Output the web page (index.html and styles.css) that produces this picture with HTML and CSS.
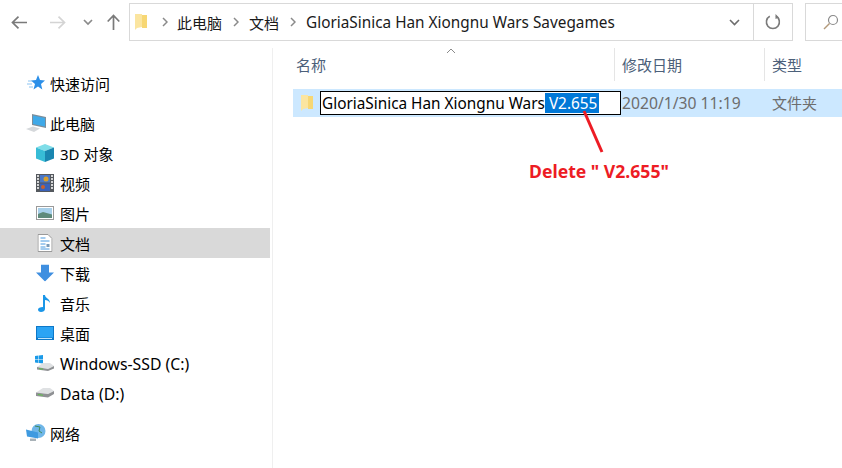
FILE: index.html
```html
<!DOCTYPE html>
<html lang="zh-CN">
<head>
  <meta charset="UTF-8">
  <title>文档</title>
  <link rel="stylesheet" href="styles.css">
</head>
<body>

  <div class="explorer">
    <!-- Toolbar -->
    <div class="toolbar">
      <div class="nav-btns">
        <svg class="nav-back" width="16" height="13" viewBox="0 0 16 13"><path d="M16 6.500H1.500M7.500 .7L1.500 6.500l6 5.800" fill="none" stroke="#7a7a7a" stroke-width="1.700"/></svg>
        <svg class="nav-forward" width="16" height="13" viewBox="0 0 16 13"><path d="M0 6.500h14.500M8.500 .7l6 5.800-6 5.800" fill="none" stroke="#d4d4d4" stroke-width="1.700"/></svg>
        <svg class="nav-down" width="10" height="7" viewBox="0 0 10 7"><path d="M1 1l4 4 4-4" fill="none" stroke="#8a8a8a" stroke-width="1.700"/></svg>
        <svg class="nav-up" width="13" height="16" viewBox="0 0 13 16"><path d="M6.500 16V1.500M.7 7.500l5.800-6 5.800 6" fill="none" stroke="#7a7a7a" stroke-width="1.700"/></svg>
      </div>

      <div class="address">
        <svg class="addr-folder" width="13" height="18" viewBox="0 0 13 18"><path d="M7 2h5v13H7z" fill="#f7d774"/><path d="M0 1h7v13l-5 1-2 2z" fill="#fbe5a0"/></svg>
        <svg class="crumb-sep first-sep" width="6" height="10" viewBox="0 0 6 10"><path d="M1 1l4 4-4 4" fill="none" stroke="#8a8a8a" stroke-width="1.500"/></svg>
        <span class="crumb">此电脑</span>
        <svg class="crumb-sep" width="6" height="10" viewBox="0 0 6 10"><path d="M1 1l4 4-4 4" fill="none" stroke="#8a8a8a" stroke-width="1.500"/></svg>
        <span class="crumb">文档</span>
        <svg class="crumb-sep" width="6" height="10" viewBox="0 0 6 10"><path d="M1 1l4 4-4 4" fill="none" stroke="#8a8a8a" stroke-width="1.500"/></svg>
        <span class="crumb crumb-latin">GloriaSinica Han Xiongnu Wars Savegames</span>
        <div class="addr-drop">
          <svg width="11" height="7" viewBox="0 0 11 7"><path d="M1 1l4.500 4.500L10 1" fill="none" stroke="#6d6d6d" stroke-width="1.600"/></svg>
        </div>
        <div class="addr-refresh">
          <svg width="16" height="16" viewBox="0 0 16 16"><path d="M11 2.300A6.500 6.500 0 1 1 4.800 2.300" fill="none" stroke="#7a7a7a" stroke-width="1.600"/><path d="M10.500 0v5l3.500-1.500z" fill="#7a7a7a"/></svg>
        </div>
      </div>

      <div class="search">
        <svg width="16" height="16" viewBox="0 0 16 16"><circle cx="10" cy="6" r="4.500" fill="none" stroke="#8a8a8a" stroke-width="1.200"/><path d="M6.500 9.500L1 15" stroke="#b39a7a" stroke-width="1.500"/></svg>
      </div>
    </div>

    <div class="main">
      <!-- Sidebar -->
      <div class="sidebar">
        <div class="side-item top-item quick">
          <svg width="18" height="16" viewBox="0 0 18 16"><path d="M11 0l2 5 5 .5-4 3.500 1.300 5.500L11 11.500 6.500 14.500 8 9 4 5.500 9 5z" fill="#2b8fe8"/><path d="M1 6h4M0 9h5M2 12h4" stroke="#8cc4f2" stroke-width="1"/></svg>
          <span>快速访问</span>
        </div>
        <div class="side-item top-item">
          <svg width="20" height="18" viewBox="0 0 20 18"><path d="M6 0l14 3v11L6 11z" fill="#7d8e9a"/><path d="M7 1.500l12 2.500v8.500L7 10z" fill="#3fa9e8"/><path d="M0 15l7-2.500 7 2-6 3.500z" fill="#d5d8db"/></svg>
          <span>此电脑</span>
        </div>
        <div class="side-item">
          <svg width="18" height="18" viewBox="0 0 18 18"><path d="M9 0l9 3.500L9 7 0 3.500z" fill="#7fdde8"/><path d="M0 3.500L9 7v11l-9-3.500z" fill="#37bcd6"/><path d="M18 3.500L9 7v11l9-3.500z" fill="#1a86b0"/></svg>
          <span>3D 对象</span>
        </div>
        <div class="side-item">
          <svg width="18" height="18" viewBox="0 0 18 18"><rect width="18" height="18" fill="#55595e"/><rect x="4" y="1" width="10" height="7.500" fill="#4a78c8"/><rect x="4" y="9.500" width="10" height="7.500" fill="#3a62b8"/><circle cx="10" cy="5" r="2.500" fill="#d9a02e"/><circle cx="7" cy="13" r="2" fill="#c9602e"/><path d="M1 2h2M1 5h2M1 8h2M1 11h2M1 14h2M15 2h2M15 5h2M15 8h2M15 11h2M15 14h2" stroke="#fff" stroke-width="1.500"/></svg>
          <span>视频</span>
        </div>
        <div class="side-item">
          <svg width="18" height="14" viewBox="0 0 18 14"><rect x=".5" y=".5" width="17" height="13" fill="#fff" stroke="#9a9a9a"/><rect x="2" y="2" width="14" height="10" fill="#a8d0ea"/><path d="M2 8l5-2 9 2.500V12H2z" fill="#5f8a7a"/></svg>
          <span>图片</span>
        </div>
        <div class="side-item selected">
          <svg width="15" height="18" viewBox="0 0 15 18"><path d="M.5.5h10l4 4v13H.5z" fill="#fff" stroke="#9a9a9a"/><path d="M3 4h5M3 7h9M3 10h5M3 13h5M3 15h9" stroke="#4a9ae0" stroke-width="1"/><rect x="9" y="10" width="3" height="3" fill="#7a9ab8"/></svg>
          <span>文档</span>
        </div>
        <div class="side-item">
          <svg width="18" height="17" viewBox="0 0 18 17"><path d="M5 0h8v8h5l-9 9-9-9h5z" fill="#3f8fe0"/></svg>
          <span>下载</span>
        </div>
        <div class="side-item">
          <svg width="14" height="18" viewBox="0 0 14 18"><path d="M5 1h2c0 3 5 3.500 5 8-1-2-3-3-5-3v9c0 2-2 3-4 3s-3-1-3-2.500S2 13 5 13z" fill="#1a96e8"/></svg>
          <span>音乐</span>
        </div>
        <div class="side-item">
          <svg width="18" height="14" viewBox="0 0 18 14"><rect width="18" height="14" fill="#0d78c8"/><rect x="1" y="1" width="16" height="10.500" fill="#2ba4f4"/><path d="M2 12.500h14" stroke="#bfe4fb"/></svg>
          <span>桌面</span>
        </div>
        <div class="side-item drive-item">
          <svg width="20" height="16" viewBox="0 0 20 16"><path d="M0 1l3.500-.5V4H0zM4 .4L8 0v4H4zM0 4.500h3.500V8L0 7.500zM4 4.500h4v4L4 8z" fill="#1a9ae8"/><path d="M2 12l6-4h7l4 3-6 3z" fill="#dfe1e3"/><path d="M2 12l11 2 6-3v2.500L13 16 2 14.500z" fill="#8f9194"/><path d="M4 13l4 .7v1L4 14z" fill="#5fc24a"/></svg>
          <span>Windows-SSD (C:)</span>
        </div>
        <div class="side-item drive-item">
          <svg width="20" height="10" viewBox="0 0 20 10"><path d="M1 4.500L8 0h7l4 3-6 3z" fill="#dfe1e3"/><path d="M1 4.500L13 6l6-3v3l-6 3.500L1 8z" fill="#8f9194"/><path d="M3 6l5 .7v1L3 7z" fill="#5fc24a"/></svg>
          <span>Data (D:)</span>
        </div>
        <div class="side-item top-item network">
          <svg width="20" height="18" viewBox="0 0 20 18"><circle cx="12.500" cy="7" r="7" fill="#6fb6e8"/><path d="M9 2l5 1-1 4 3 2" fill="none" stroke="#3f8a5a"/><path d="M0 5.500l12 3v6L1 12.500z" fill="#3f9ae0"/><path d="M4 14.500h6V17H4z" fill="#a9b2b8"/></svg>
          <span>网络</span>
        </div>
      </div>

      <div class="splitter"></div>

      <!-- File list -->
      <div class="files">
        <svg class="sort-arrow" width="10" height="6" viewBox="0 0 10 6"><path d="M1 5l4-4 4 4" fill="none" stroke="#8a8a8a"/></svg>
        <div class="col-head">
          <div class="col col-name">名称</div>
          <div class="col col-date">修改日期</div>
          <div class="col col-type">类型</div>
        </div>
        <div class="file-row">
          <svg class="file-icon" width="13" height="18" viewBox="0 0 13 18"><path d="M7 2h5v13H7z" fill="#f7d774"/><path d="M0 1h7v13l-5 1-2 2z" fill="#fbe5a0"/></svg>
          <div class="rename"><span>GloriaSinica Han Xiongnu Wars</span><span class="sel"> V2.655</span></div>
          <div class="file-date">2020/1/30 11:19</div>
          <div class="file-type">文件夹</div>
        </div>

        <!-- Annotation drawn over the list -->
        <svg class="pointer" width="24" height="46" viewBox="0 0 24 46"><path d="M2 2l18 41" stroke="#ed1c24" stroke-width="3" fill="none"/></svg>
        <div class="note">Delete " V2.655"</div>
      </div>
    </div>
  </div>

</body>
</html>
```

FILE: styles.css
```css
/* General Styles */
body {
  font-family: "Noto Sans", "Noto Sans CJK SC", sans-serif;
  font-size: 15px;
  color: #000;
  background-color: #fff;
  margin: 0;
}

.explorer {
  height: 468px;
  overflow: hidden;
}

/* Toolbar */
.toolbar {
  display: flex;
  height: 38px;
  padding-top: 3px;
}

.nav-btns {
  width: 129px;
  display: flex;
  align-items: center;
}

.nav-back { margin-left: 11px; }
.nav-forward { margin-left: 23px; }
.nav-down { margin-left: 17px; }
.nav-up { margin-left: 14px; }

.address {
  width: 662px;
  border: 1px solid #d9d9d9;
  display: flex;
  align-items: center;
  color: #1a1a1a;
}

.addr-folder { margin-left: 5px; }
.crumb-sep { margin: 0 10px 0 11px; }
.first-sep { margin-left: 14px; margin-right: 9px; }
.crumb { white-space: nowrap; }
.crumb-latin { font-size: 15.35px; }

.addr-drop {
  margin-left: auto;
  width: 33px;
  display: flex;
  justify-content: center;
  padding-right: 4px;
  box-sizing: border-box;
}

.addr-refresh {
  width: 38px;
  height: 100%;
  border-left: 1px solid #d9d9d9;
  display: flex;
  align-items: center;
  justify-content: center;
}

.search {
  flex: 1;
  margin-left: 12px;
  border: 1px solid #d9d9d9;
  border-right: none;
  display: flex;
  align-items: center;
  padding-left: 17px;
}

/* Main area */
.main {
  display: flex;
  height: 427px;
}

.sidebar {
  width: 270px;
  padding-top: 27px;
  flex-shrink: 0;
}

.side-item {
  height: 30px;
  display: flex;
  align-items: center;
  padding-left: 60px;
  position: relative;
  white-space: nowrap;
}

.side-item svg {
  position: absolute;
  left: 45px;
  top: 50%;
  transform: translate(-50%, -50%);
}

.drive-item {
  font-size: 15.8px;
  box-sizing: border-box;
  padding-top: 2px;
}

.top-item { padding-left: 50px; }
.top-item svg { left: 36px; }
.network { margin-top: 10px; }
.quick { margin-bottom: 10px; }
.selected { background-color: #d9d9d9; }

.splitter {
  width: 1px;
  margin: 7px 0 0 2px;
  background-color: #efefef;
}

/* File list */
.files {
  flex: 1;
  position: relative;
  padding-left: 20px;
}

.sort-arrow {
  position: absolute;
  left: 173px;
  top: 7px;
}

.col-head {
  display: flex;
  height: 33px;
  margin-top: 7px;
  color: #4c607a;
}

.col {
  display: flex;
  align-items: center;
  border-right: 1px solid #e5e5e5;
  box-sizing: border-box;
}

.col-name { width: 322px; padding-left: 3px; }
.col-date { width: 150px; padding-left: 7px; }
.col-type { border-right: none; padding-left: 7px; }

.file-row {
  display: flex;
  align-items: center;
  height: 28px;
  margin-top: 8px;
  background-color: #cce8ff;
  color: #6d6d6d;
}

.file-icon { margin-left: 8px; }

.rename {
  width: 301px;
  height: 24px;
  margin-left: 6px;
  padding-left: 1px;
  box-sizing: border-box;
  border: 1px solid #000;
  background-color: #fff;
  color: #000;
  display: flex;
  align-items: center;
  white-space: pre;
  font-size: 15.35px;
}

.sel {
  background-color: #0078d7;
  color: #fff;
  height: 20px;
  line-height: 20px;
  padding-right: 2px;
}

.file-date {
  width: 150px;
  padding-left: 1px;
  box-sizing: border-box;
  font-size: 15.7px;
}

.file-type {
  padding-left: 1px;
  margin-top: -2px;
}

.pointer {
  position: absolute;
  left: 309px;
  top: 68px;
}

.note {
  position: absolute;
  left: 256px;
  top: 118px;
  color: #ed1c24;
  font-weight: bold;
  font-size: 17.6px;
  white-space: nowrap;
}
```
